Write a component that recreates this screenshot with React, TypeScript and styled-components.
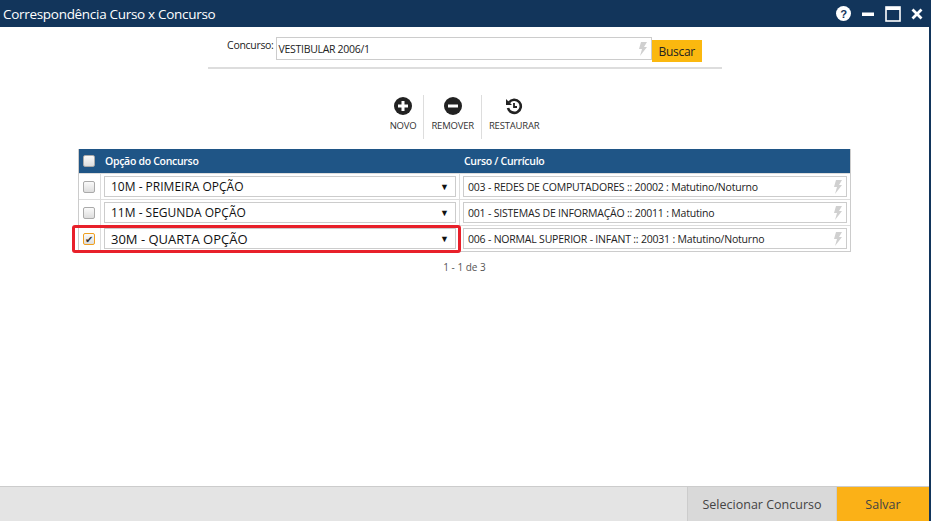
import React from "react";
import styled, { createGlobalStyle } from "styled-components";

const G = createGlobalStyle`
  html,body{margin:0;padding:0;background:#fff;}
  body{font-family:"Open Sans","Noto Sans",sans-serif;}
  *{box-sizing:border-box;}
`;
const Win = styled.div`width:931px;height:521px;display:flex;flex-direction:column;border-right:2px solid #12355b;`;
const Title = styled.div`height:27px;background:#12355b;color:#fff;display:flex;align-items:center;padding:0 6px 0 3px;font-size:13.5px;letter-spacing:-0.3px;`;
const TitleText = styled.div`flex:1;`;
const TIcons = styled.div`display:flex;gap:10px;align-items:center;`;
const Body = styled.div`flex:1;display:flex;flex-direction:column;align-items:center;`;
const SearchRow = styled.div`width:514px;margin-top:10px;padding-bottom:5px;border-bottom:2px solid #ddd;display:flex;align-items:flex-start;justify-content:center;font-size:10.5px;letter-spacing:-0.3px;`;
const Lbl = styled.span`margin-top:1px;margin-right:2px;color:#222;`;
const Inp = styled.div`width:376px;height:23px;border:1px solid #ccc;display:flex;align-items:center;justify-content:space-between;padding:0 4px 0 2px;color:#222;`;
const Buscar = styled.div`background:#fbb80f;height:22px;margin-top:3px;padding:0 7px;display:flex;align-items:center;font-size:12px;color:#222;`;
const Tools = styled.div`display:flex;margin-top:26px;height:44px;`;
const Tool = styled.div<{sep?:boolean}>`display:flex;flex-direction:column;align-items:center;justify-content:flex-start;padding:0 7px;border-left:${p=>p.sep?"1px solid #ddd":"none"};font-size:9.5px;color:#333;letter-spacing:-0.2px;gap:4px;padding-top:2px;`;
const Table = styled.div`width:773px;margin-top:10px;border:1px solid #ccc;border-top:none;`;
const Head = styled.div`height:24px;background:#1f5586;color:#fff;font-weight:600;font-size:10.5px;letter-spacing:-0.3px;display:grid;grid-template-columns:21px 359px 1fr;align-items:center;`;
const Row = styled.div`height:26px;display:grid;grid-template-columns:21px 359px 1fr;border-top:1px solid #ddd;align-items:center;position:relative;`;
const Cell = styled.div`height:100%;display:flex;align-items:center;padding:0 3px;border-left:1px solid #ddd;`;
const Box = styled.div<{on?:boolean;hl?:boolean}>`width:12px;height:12px;margin-left:4px;border:1px solid ${p=>p.hl?"#f0a020":"#aaa"};border-radius:2px;background:linear-gradient(#fafafa,#ddd);display:flex;align-items:center;justify-content:center;font-size:10px;color:#333;line-height:1;`;
const Sel = styled.div<{big?:boolean}>`flex:1;height:21px;border:1px solid #ccc;display:flex;align-items:center;justify-content:space-between;padding:0 6px;font-size:${p=>p.big?"13px":"12px"};color:#111;`;
const Arrow = styled.span`font-size:9px;color:#111;`;
const Curso = styled.div`flex:1;height:21px;border:1px solid #ccc;display:flex;align-items:center;justify-content:space-between;padding:0 4px;font-size:10.5px;letter-spacing:-0.2px;color:#222;`;
const HL = styled.div`position:absolute;left:-7px;top:-1px;width:389px;height:28px;border:3px solid #e8202a;border-radius:3px;pointer-events:none;`;
const Pager = styled.div`margin-top:8px;font-size:10px;color:#555;`;
const Footer = styled.div`height:35px;background:#e4e4e4;border-top:1px solid #ccc;display:flex;justify-content:flex-end;`;
const FBtn = styled.div<{primary?:boolean}>`display:flex;align-items:center;justify-content:center;font-size:12.5px;color:#444;width:${p=>p.primary?"93px":"149px"};background:${p=>p.primary?"#fbb117":"#d9d9d9"};border-left:1px solid #ccc;`;

const Bolt = () => (<svg width="9" height="14" viewBox="0 0 9 14"><path d="M3 0h6L6 5h3L2 14l2-7H1z" fill="#d0d0d0"/></svg>);
const CircleIcon = ({kind}:{kind:string}) => (
  <svg width="18" height="18" viewBox="0 0 18 18">
    <circle cx="9" cy="9" r="9" fill="#222"/>
    <rect x="4" y="7.5" width="10" height="3" fill="#fff"/>
    {kind==="plus" && <rect x="7.5" y="4" width="3" height="10" fill="#fff"/>}
  </svg>
);
const Restore = () => (
  <svg width="18" height="18" viewBox="0 0 18 18"><path d="M4 5.5A6.5 6.5 0 1 1 3 11" fill="none" stroke="#222" strokeWidth="2.6"/><path d="M1 2l0 6 6 0z" fill="#222"/><path d="M9 6v4h3" fill="none" stroke="#222" strokeWidth="1.8"/></svg>
);

const rows = [
  {o:"10M - PRIMEIRA OPÇÃO",c:"003 - REDES DE COMPUTADORES :: 20002 : Matutino/Noturno"},
  {o:"11M - SEGUNDA OPÇÃO",c:"001 - SISTEMAS DE INFORMAÇÃO :: 20011 : Matutino"},
  {o:"30M - QUARTA OPÇÃO",c:"006 - NORMAL SUPERIOR - INFANT :: 20031 : Matutino/Noturno",on:true},
];

export default function App(){
  return (<Win><G/>
    <Title><TitleText>Correspondência Curso x Concurso</TitleText>
      <TIcons>
        <svg width="15" height="15" viewBox="0 0 16 16"><circle cx="8" cy="8" r="8" fill="#fff"/><text x="8" y="12.5" textAnchor="middle" fontSize="12" fontWeight="bold" fill="#12355b" fontFamily="Liberation Sans">?</text></svg>
        <svg width="14" height="14" viewBox="0 0 14 14"><rect x="1" y="5.5" width="12" height="3.5" fill="#fff"/></svg>
        <svg width="16" height="16" viewBox="0 0 16 16"><rect x="1" y="1" width="14" height="14" fill="none" stroke="#fff" strokeWidth="1.6"/><rect x="1" y="1" width="14" height="3" fill="#fff"/></svg>
        <svg width="12" height="12" viewBox="0 0 12 12"><path d="M1.5 1.5l9 9M10.5 1.5l-9 9" stroke="#fff" strokeWidth="2.8"/></svg>
      </TIcons>
    </Title>
    <Body>
      <SearchRow><Lbl>Concurso:</Lbl><Inp>VESTIBULAR 2006/1<Bolt/></Inp><Buscar>Buscar</Buscar></SearchRow>
      <Tools>
        <Tool><CircleIcon kind="plus"/>NOVO</Tool>
        <Tool sep><CircleIcon kind="minus"/>REMOVER</Tool>
        <Tool sep><Restore/>RESTAURAR</Tool>
      </Tools>
      <Table>
        <Head><Box/><span style={{paddingLeft:5}}>Opção do Concurso</span><span style={{paddingLeft:5}}>Curso / Currículo</span></Head>
        {rows.map((r,i)=>(
          <Row key={i}>
            <Box on={r.on} hl={r.on}>{r.on?"✔":""}</Box>
            <Cell><Sel big={r.on}>{r.o}<Arrow>▼</Arrow></Sel></Cell>
            <Cell><Curso>{r.c}<Bolt/></Curso></Cell>
            {r.on && <HL/>}
          </Row>
        ))}
      </Table>
      <Pager>1 - 1 de 3</Pager>
    </Body>
    <Footer><FBtn>Selecionar Concurso</FBtn><FBtn primary>Salvar</FBtn></Footer>
  </Win>);
}
